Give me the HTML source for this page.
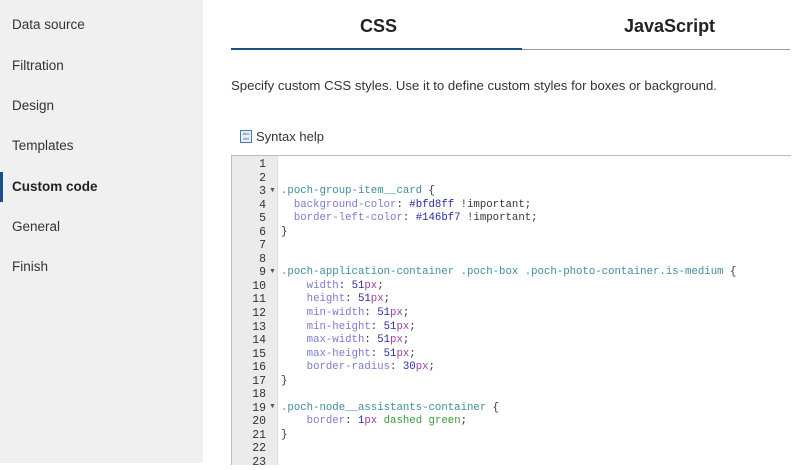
<!DOCTYPE html>
<html><head><meta charset="utf-8"><style>
*{margin:0;padding:0;box-sizing:border-box}
body{width:800px;height:463px;overflow:hidden;background:#fff;font-family:"Segoe UI","Liberation Sans",sans-serif;position:relative;color:#333}
.side{position:absolute;left:0;top:0;width:203px;height:463px;background:#f0f0f0}
.side div{position:absolute;left:12px;font-size:13.5px;color:#333}
.side .act{font-weight:bold;color:#222}
.bar{position:absolute;left:0;top:172px;width:3px;height:30px;background:#1a4f86}
.tab{position:absolute;top:16px;font-size:18px;font-weight:bold;color:#222}
.line{position:absolute;left:231px;top:49px;width:559px;height:1px;background:#999}
.uline{position:absolute;left:231px;top:48px;width:291px;height:2px;background:#1a4f86}
.desc{position:absolute;left:231px;top:78px;font-size:13.2px;color:#333}
.sh{position:absolute;left:256px;top:129px;font-size:13px;color:#333}
.ico{position:absolute;left:240px;top:130px;width:12px;height:13px;border:1px solid #4a7ab0;background:#e8f0fa;font-size:4px;line-height:5px;color:#2a5a9a;text-align:center;font-family:"Liberation Sans",sans-serif}
.ed{position:absolute;left:231px;top:155px;width:560px;height:310px;border-top:1px solid #bbb;border-left:1px solid #bbb}
.gut{position:absolute;left:0;top:0;width:46px;height:100%;background:#ebebeb;border-right:1px solid #ddd}
pre{position:absolute;top:2px;font-family:"Liberation Mono",monospace;font-size:10.7px;line-height:13.55px}
.num{left:0;width:34px;text-align:right;color:#333;font-size:11.5px}
.code{left:49px;color:#333}
.s{color:#3e8d9c}.p{color:#7b7bd0}.h{color:#2a2aa8}.n{color:#2a2aa8}.u{color:#9a3fa0}.g{color:#3a9a3a}
.ar{position:absolute;left:37px;font-size:7px;color:#555}
</style></head><body>
<div class="side">
<div style="top:17px">Data source</div>
<div style="top:58px">Filtration</div>
<div style="top:98px">Design</div>
<div style="top:138px">Templates</div>
<div class="act" style="top:179px">Custom code</div>
<div style="top:219px">General</div>
<div style="top:259px">Finish</div>
</div>
<div class="bar"></div>
<div class="tab" style="left:360px">CSS</div>
<div class="tab" style="left:624px">JavaScript</div>
<div class="line"></div><div class="uline"></div>
<div class="desc">Specify custom CSS styles. Use it to define custom styles for boxes or background.</div>
<div class="ico">Abc<br>def</div>
<div class="sh">Syntax help</div>
<div class="ed">
<div class="gut"></div>
<pre class="num">1
2
3
4
5
6
7
8
9
10
11
12
13
14
15
16
17
18
19
20
21
22
23</pre>
<div class="ar" style="top:31px">▼</div>
<div class="ar" style="top:112px">▼</div>
<div class="ar" style="top:247px">▼</div>
<pre class="code">


<span class="s">.poch-group-item__card</span> {
  <span class="p">background-color</span>: <span class="h">#bfd8ff</span> !important;
  <span class="p">border-left-color</span>: <span class="h">#146bf7</span> !important;
}


<span class="s">.poch-application-container .poch-box .poch-photo-container.is-medium</span> {
    <span class="p">width</span>: <span class="n">51</span><span class="u">px</span>;
    <span class="p">height</span>: <span class="n">51</span><span class="u">px</span>;
    <span class="p">min-width</span>: <span class="n">51</span><span class="u">px</span>;
    <span class="p">min-height</span>: <span class="n">51</span><span class="u">px</span>;
    <span class="p">max-width</span>: <span class="n">51</span><span class="u">px</span>;
    <span class="p">max-height</span>: <span class="n">51</span><span class="u">px</span>;
    <span class="p">border-radius</span>: <span class="n">30</span><span class="u">px</span>;
}

<span class="s">.poch-node__assistants-container</span> {
    <span class="p">border</span>: <span class="n">1</span><span class="u">px</span> <span class="g">dashed green</span>;
}
</pre>
</div>
</body></html>
